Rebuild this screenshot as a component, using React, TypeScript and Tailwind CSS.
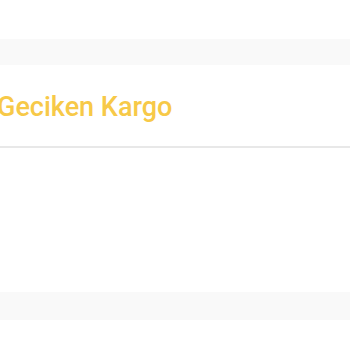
import React from "react";

export default function App() {
  return (
    <div className="w-[350px] h-[350px] bg-white overflow-hidden" style={{ fontFamily: "Roboto, sans-serif" }}>
      <div className="h-[39px]" />
      <div className="h-[26px] bg-[#f9f9f9]" />
      <div className="h-[83px] border-b-2 border-[#e8e8e8] flex items-center pt-[4px]">
        <h1 className="-ml-[3px] text-[27px] font-medium text-[#f7c948] leading-none whitespace-nowrap">Geciken Kargo</h1>
      </div>
      <div className="h-[144px]" />
      <div className="h-[28px] bg-[#f9f9f9]" />
    </div>
  );
}
